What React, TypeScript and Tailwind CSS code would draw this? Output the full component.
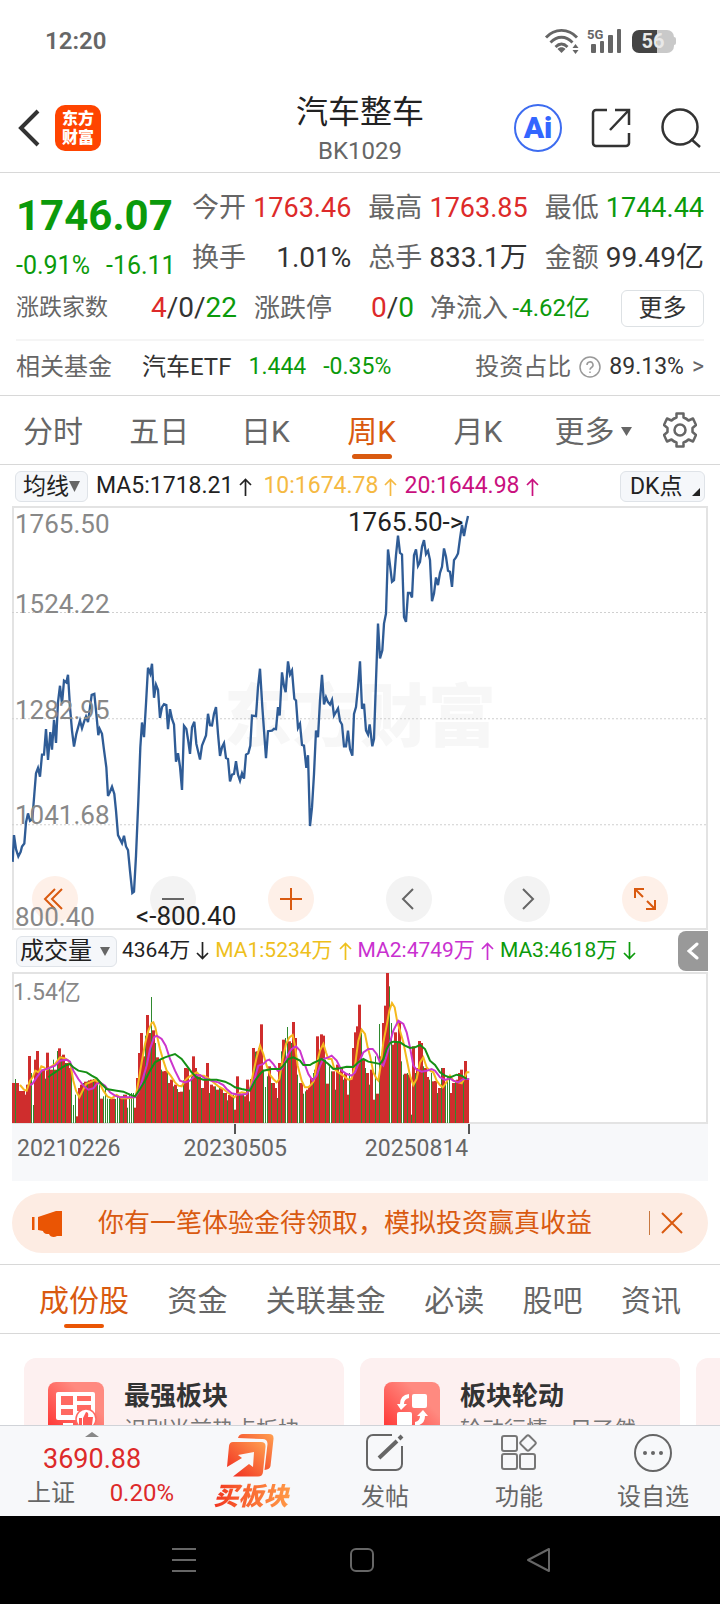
import { useState } from 'react'

const PERIODS = ['分时', '五日', '日K', '周K', '月K']
const SECTIONS = ['成份股', '资金', '关联基金', '必读', '股吧', '资讯']

// weekly close, drawn in thirds of a pixel
const PRICE_LINE =
  '38,1083 42,1003 48,1045 55,1067 62,1053 66,1037 73,1028 78,965 84,938 90,960 97,955 103,880 108,818 114,802 120,828 126,762 132,762 138,686 144,778 151,695 156,747 162,658 168,727 174,605 180,556 186,610 192,541 199,546 204,523 210,620 216,690 222,738 229,700 240,660 246,683 254,658 258,648 264,665 275,583 283,580 289,640 295,704 299,685 306,700 312,748 319,800 324,886 330,873 336,858 343,880 348,930 354,1003 366,1027 372,1005 378,1037 384,1048 390,1110 397,1176 402,1172 408,1065 415,900 421,740 426,666 432,710 438,610 444,502 451,520 456,490 462,592 468,553 474,568 480,652 486,620 492,611 499,614 504,686 510,626 516,655 522,672 528,783 534,758 540,798 546,868 552,676 559,685 564,716 570,760 576,680 583,664 589,730 600,777 606,735 618,705 624,640 630,674 636,675 642,640 648,620 654,700 660,766 666,740 672,728 678,772 684,775 690,842 696,822 702,820 708,782 714,822 720,840 726,818 732,834 738,762 745,758 751,735 756,645 768,647 774,560 780,505 787,620 798,773 804,692 816,690 822,685 828,686 834,620 839,645 846,516 852,557 857,575 864,483 870,522 876,510 883,595 888,600 894,682 900,670 906,733 912,735 919,802 924,764 930,976 936,920 942,820 948,690 954,710 960,600 966,523 972,612 978,590 984,605 990,612 996,598 1002,645 1014,624 1020,662 1026,672 1032,737 1038,737 1044,690 1050,745 1057,765 1062,640 1068,620 1074,560 1080,483 1086,625 1092,610 1098,690 1104,702 1109,672 1117,737 1122,715 1128,540 1134,370 1140,474 1147,450 1152,370 1158,340 1164,148 1170,195 1176,245 1182,240 1188,165 1194,107 1200,158 1206,163 1212,350 1218,365 1224,278 1230,278 1236,292 1242,165 1248,148 1254,197 1260,185 1266,140 1272,120 1278,162 1284,152 1290,180 1296,303 1302,280 1308,232 1314,255 1320,218 1326,200 1332,145 1338,170 1344,212 1350,215 1356,260 1362,180 1368,172 1374,160 1380,115 1386,75 1392,108 1398,75 1404,48'

// weekly volume, negative = down week
const VOLUME = [
  120, -132, 120, 96, 96, 96, 85, 115, 201, -150, -54, 190, 216, 150, -160, 160, -133, 211, -165, 160,
  -190, 160, -216, 224, -200, 205, -180, 180, 165, -162, -54, -85, 20, 105, 115, -120, 124, -125, 128, 130,
  -132, 130, -128, -115, 73, -80, -110, -73, -72, 73, 73, -72, -78, -80, 80, -85, 85, -46, -85, -90,
  -90, 46, 135, 210, 270, 200, -262, 324, 270, -378, 278, -240, 197, 190, -160, 155, 156, -155, 120, 130,
  -110, 115, -102, 93, 94, -128, 165, 164, -100, -140, 200, 165, -145, 140, -105, 105, 130, 180, -90, 115,
  110, -110, 100, -105, 105, -90, 90, -68, 84, 80, -85, 40, 140, -85, 84, -85, 80, 130, -65, 132,
  225, -214, 215, 225, 296, -160, -108, -140, 170, -120, 120, 105, -75, 180, -215, 250, -255, -288, 245, -240,
  303, 255, -145, -120, 120, -88, -95, 100, 110, 135, -150, 160, 260, -210, 266, 262, -190, 118, -170, -155,
  155, -100, 175, -150, 165, -130, 150, 85, -150, 130, 225, 272, 290, 355, -270, 190, -165, 150, -115, 160,
  70, -200, 88, -297, 200, 300, 352, 450, -410, -300, 235, 272, -240, 300, -185, -145, 148, -150, 145, -25,
  230, -150, 165, 246, 240, -170, 165, 138, -130, -150, 125, 126, -90, 105, -165, 165, -120, -140, -138, 90,
  120, -125, 130, 150, 160, -130, 186, 130,
]

const MA1 =
  '60,478 72,492 80,495 90,465 98,455 106,435 116,440 124,422 132,425 140,432 150,425 165,415 180,395 195,398 205,405 212,420 220,465 228,495 238,515 248,495 258,475 270,470 285,463 300,475 310,495 322,512 335,518 350,508 365,518 385,518 400,515 408,508 415,470 425,410 435,355 445,315 455,292 460,290 466,305 472,335 480,370 490,405 500,435 512,450 525,470 535,480 545,482 555,465 565,455 578,447 590,440 600,450 612,450 625,458 640,470 655,482 670,490 685,502 695,510 703,515 712,505 725,500 740,503 750,490 760,440 770,395 780,360 790,385 800,420 810,448 820,460 830,470 838,460 848,400 858,355 868,335 878,328 885,360 893,420 905,465 915,485 925,485 935,475 942,465 950,415 960,375 970,355 978,380 985,400 995,400 1003,430 1015,440 1030,450 1045,462 1055,460 1065,420 1075,345 1085,312 1095,325 1103,365 1110,390 1120,440 1130,460 1135,465 1142,420 1150,350 1160,300 1168,255 1176,232 1184,245 1192,290 1200,315 1210,350 1220,400 1230,450 1240,478 1250,460 1260,410 1270,395 1280,425 1290,435 1300,440 1310,465 1320,478 1328,485 1336,475 1350,450 1360,465 1375,470 1385,473 1392,460 1400,440 1408,440'
const MA2 =
  '90,478 97,475 110,455 125,435 145,428 165,420 180,405 200,402 210,408 220,435 235,460 250,480 265,492 280,488 290,475 300,470 315,480 330,500 345,510 360,515 405,515 415,500 425,470 440,420 450,370 462,335 470,330 485,340 497,360 510,400 525,435 540,465 555,470 570,465 585,450 600,448 615,458 635,465 655,470 670,478 680,490 695,503 715,507 740,505 755,480 765,455 775,420 790,415 800,405 808,402 820,415 833,435 845,430 855,410 865,385 875,370 888,362 900,375 910,405 925,445 938,465 950,450 960,420 970,400 985,395 995,390 1010,405 1025,435 1040,445 1055,450 1065,440 1075,415 1090,380 1105,370 1118,370 1130,385 1140,410 1150,420 1160,390 1170,350 1180,315 1195,285 1210,295 1220,320 1230,365 1240,420 1250,432 1265,438 1280,435 1295,430 1305,435 1320,455 1335,463 1350,458 1360,465 1375,470 1390,460 1408,460'
const MA3 =
  '145,455 150,450 165,440 180,430 195,420 210,415 220,425 235,435 260,440 275,450 290,458 305,475 320,490 350,495 370,498 390,507 405,512 420,490 435,465 450,435 465,410 480,402 495,395 510,390 525,385 545,400 560,420 575,440 590,455 610,462 650,462 675,468 690,475 705,485 725,490 750,495 765,465 780,445 790,435 815,430 840,430 850,420 865,400 880,395 900,405 910,418 930,418 940,412 955,405 965,400 985,415 1000,430 1020,428 1040,423 1060,424 1075,410 1090,400 1105,408 1140,415 1150,400 1160,370 1170,352 1180,348 1200,350 1215,360 1230,367 1245,365 1260,358 1275,370 1290,405 1305,418 1320,440 1335,450 1350,455 1370,447 1385,450 1400,460'

const PILL = 'flex h-[31px] items-center rounded-md border border-[#dfe3e8] bg-[#f5f7fa] leading-none text-[#222]'

function StatusBar() {
  return (
    <div className="flex h-[82px] shrink-0 items-center pr-[44px] pl-[45px] text-[#666]">
      <span className="flex-1 text-2xl font-semibold">12:20</span>
      <svg width="36" height="26" viewBox="0 0 36 26" fill="none" stroke="#666" strokeWidth="2.800">
        <path d="M2 9.500C10.500 0 24.500 0 33 9.500M6.500 14.500C13 7.500 22 7.500 28.500 14.500M11.500 19C15.500 15 19.500 15 23.500 19" />
        <path d="M17.500 25l-4-4c2-2.500 6-2.500 8 0z" fill="#666" stroke="none" />
        <path d="M28.500 20l3-4 3 4zM28.500 22h6l-3 4z" fill="#666" stroke="none" />
      </svg>
      <div className="relative ml-[7px] h-[26px] w-[36px]">
        <span className="absolute top-0 left-0 text-[13px] leading-[13px] font-bold">5G</span>
        <svg className="ml-[4px]" width="32" height="26" viewBox="0 0 32 26" fill="#666">
          <rect x="0" y="16" width="5" height="9" rx="1" />
          <rect x="9" y="13" width="4" height="12" rx="1" />
          <rect x="17" y="7" width="5" height="18" rx="1" />
          <rect x="26" y="1" width="4" height="24" rx="1" />
        </svg>
      </div>
      <div className="ml-[9px] flex h-[23px] w-[42px] items-center justify-center rounded-[7px] bg-linear-to-r from-[#444] from-60% to-[#c9c9c9] to-60% text-xl leading-none font-bold text-[#e8e8e8]">
        56
      </div>
      <span className="h-[8px] w-[2px] rounded-r-full bg-[#c9c9c9]" />
    </div>
  )
}

function Header() {
  return (
    <header className="grid h-[91px] shrink-0 grid-cols-[1fr_auto_1fr] items-center border-b border-[#d8d8d8] px-[18px]">
      <div className="flex items-center gap-[15px] pt-[2px]">
        <button aria-label="返回">
          <svg width="22" height="38" viewBox="0 0 22 38" fill="none" stroke="#333" strokeWidth="4">
            <path d="M20 2L3 19l17 17" />
          </svg>
        </button>
        <div className="flex size-[46px] flex-col items-center justify-center rounded-[10px] bg-[#ff4400] text-[16px] leading-[19px] font-black text-white">
          <span>东方</span>
          <span>财富</span>
        </div>
      </div>
      <div className="flex flex-col items-center pt-[6px]">
        <h1 className="text-[32px] leading-[42px] text-[#222]">汽车整车</h1>
        <p className="text-2xl leading-[36px] text-[#666]">BK1029</p>
      </div>
      <div className="flex items-center justify-end gap-[29px] pt-[2px]">
        <button aria-label="AI" className="flex size-[48px] items-center justify-center rounded-full border-2 border-[#3d6cf0] text-[30px] leading-none font-black text-[#3366ff]">
          Ai
        </button>
        <button aria-label="分享">
          <svg width="40" height="40" viewBox="0 0 40 40" fill="none" stroke="#333" strokeWidth="2.500">
            <path d="M16 2H5a3 3 0 0 0-3 3v30a3 3 0 0 0 3 3h30a3 3 0 0 0 3-3V25M24 2h14v15M37 3L19 22" />
          </svg>
        </button>
        <button aria-label="搜索">
          <svg width="42" height="42" viewBox="0 0 42 42" fill="none" stroke="#333" strokeWidth="2.500">
            <circle cx="20" cy="20" r="17.500" />
            <path d="M31 32l9 8" />
          </svg>
        </button>
      </div>
    </header>
  )
}

function Stat({ label, value, color }: { label: string; value: string; color: string }) {
  return (
    <div className="flex h-[50px] items-center justify-between text-[27px] whitespace-nowrap">
      <span className="text-[#666]">{label}</span>
      <span className={color}>{value}</span>
    </div>
  )
}

function Quote() {
  return (
    <section className="border-b border-[#d8d8d8] px-4 pt-[10px] whitespace-nowrap text-[#666]">
      <div className="flex">
        <div className="w-[176px]">
          <div className="flex h-[64px] items-center text-[42px] font-bold text-[#0b9a0b]">1746.07</div>
          <div className="flex h-[38px] items-center gap-[16px] text-[25px] text-[#0b9a0b]">
            <span>-0.91%</span>
            <span>-16.11</span>
          </div>
        </div>
        <div className="grid h-[100px] flex-1 grid-cols-3 gap-x-[17px]">
          <Stat label="今开" value="1763.46" color="text-[#dd2a2a]" />
          <Stat label="最高" value="1763.85" color="text-[#dd2a2a]" />
          <Stat label="最低" value="1744.44" color="text-[#0b9a0b]" />
          <Stat label="换手" value="1.01%" color="text-[28px] text-[#333]" />
          <Stat label="总手" value="833.1万" color="text-[28px] text-[#333]" />
          <Stat label="金额" value="99.49亿" color="text-[28px] text-[#333]" />
        </div>
      </div>
      <div className="flex h-[46px] items-center">
        <div className="flex w-[221px] items-center justify-between">
          <span className="text-[23px]">涨跌家数</span>
          <span className="text-[28px] text-[#333]">
            <span className="text-[#dd2a2a]">4</span>/0/<span className="text-[#0b9a0b]">22</span>
          </span>
        </div>
        <div className="ml-[17px] flex w-[160px] items-center justify-between">
          <span className="text-[26px]">涨跌停</span>
          <span className="text-[28px] text-[#333]">
            <span className="text-[#dd2a2a]">0</span>/<span className="text-[#0b9a0b]">0</span>
          </span>
        </div>
        <div className="ml-[16px] flex w-[160px] items-center justify-between">
          <span className="text-[26px]">净流入</span>
          <span className="text-2xl text-[#0b9a0b]">-4.62亿</span>
        </div>
        <button className="ml-auto h-[37px] w-[83px] rounded-md border border-[#dde1e4] text-2xl leading-none text-[#333]">更多</button>
      </div>
      <div className="mt-[8px] flex h-[56px] items-center border-t-2 border-[#f5f5f5] pb-[2px] text-2xl">
        <span className="mr-[30px]">相关基金</span>
        <a href="#etf" className="flex items-center gap-[17px] text-[23px] text-[#0b9a0b]">
          <span className="text-2xl text-[#333]">汽车ETF</span>
          <span>1.444</span>
          <span>-0.35%</span>
        </a>
        <a href="#ratio" className="ml-auto flex items-center gap-[8px]">
          投资占比
          <svg width="22" height="22" viewBox="0 0 22 22" fill="none" stroke="#999" strokeWidth="1.500">
            <circle cx="11" cy="11" r="10" />
            <path d="M8 9a3 3 0 1 1 4.500 2.500c-1 .6-1.500 1-1.500 2.200M11 15.500v1.500" />
          </svg>
          <span className="text-[23px] text-[#333]">89.13%</span>
          <span className="text-[23px]">&gt;</span>
        </a>
      </div>
    </section>
  )
}

function PeriodTabs() {
  const [active, setActive] = useState('周K')
  return (
    <nav className="flex h-[69px] items-stretch border-b border-[#d8d8d8] pr-4 text-[30px] text-[#666]">
      {PERIODS.map(p => (
        <button
          key={p}
          onClick={() => setActive(p)}
          className={`relative flex flex-1 items-center justify-center pt-[2px] ${p === active ? 'text-[#d95a10]' : ''}`}
        >
          {p}
          {p === active && <span className="absolute bottom-[5px] h-[5px] w-[40px] rounded-full bg-[#d95a10]" />}
        </button>
      ))}
      <button className="flex w-[124px] items-center justify-center gap-[6px] pt-[2px]">
        更多
        <svg width="11" height="9" viewBox="0 0 11 9" fill="#666">
          <path d="M0 0h11L5.500 9z" />
        </svg>
      </button>
      <button aria-label="设置" className="flex w-[49px] items-center justify-center">
        <svg width="34" height="36" viewBox="0 0 34 36" fill="none" stroke="#666" strokeWidth="2.500" strokeLinejoin="round">
          <path d="M13.500 1.500h7v4q3 1 5 3l4.500-2 3 6.500-3.500 3v4l3.500 3-3 6.500-4.500-2q-2 2-5 3v4h-7v-4q-3-1-5-3l-4.500 2L1 23l3.500-3v-4L1 13l3-6.500 4.500 2q2-2 5-3z" />
          <circle cx="17" cy="18" r="5.500" />
        </svg>
      </button>
    </nav>
  )
}

function Arrow({ up }: { up?: boolean }) {
  return (
    <svg className="ml-[6px]" width="13" height="18" viewBox="0 0 13 18" fill="none" stroke="currentColor" strokeWidth="1.700">
      <path d={up ? 'M6.500 18V1.500M1 7l5.500-5.500L12 7' : 'M6.500 0v16.500M1 11l5.500 5.500L12 11'} />
    </svg>
  )
}

function ChartButton({ warm, label, children }: { warm?: boolean; label: string; children: React.ReactNode }) {
  return (
    <button aria-label={label} className={`size-[46px] rounded-full ${warm ? 'bg-[#fef0e8]' : 'bg-[#f3f3f3]'}`}>
      <svg width="46" height="46" viewBox="0 0 46 46" fill="none" stroke={warm ? '#d95a10' : '#666'} strokeWidth="2">
        {children}
      </svg>
    </button>
  )
}

function PriceChart() {
  return (
    <section>
      <div className="flex h-[41px] items-center px-[15px] pt-[2px] text-[23px] whitespace-nowrap">
        <button className={`${PILL} w-[73px] justify-center`}>
          均线
          <svg width="11" height="11" viewBox="0 0 11 11" fill="#666">
            <path d="M0 0h11L5.500 11z" />
          </svg>
        </button>
        <span className="ml-[8px] flex items-center text-[#222]">MA5:1718.21<Arrow up /></span>
        <span className="ml-[11px] flex items-center text-[#f5b942]">10:1674.78<Arrow up /></span>
        <span className="ml-[7px] flex items-center text-[#c9107e]">20:1644.98<Arrow up /></span>
        <button className={`${PILL} ml-auto w-[85px] justify-between pr-[4px] pl-[9px]`}>
          DK点
          <svg className="mb-[5px] self-end" width="8" height="8" viewBox="0 0 8 8" fill="#222">
            <path d="M8 0v8H0z" />
          </svg>
        </button>
      </div>
      <div className="relative mx-3 h-[424px] text-[26px] leading-none text-[#888] inset-ring-2 inset-ring-[#e3e3e3]">
        <div className="absolute inset-0 flex items-center justify-center text-[68px] font-black text-[#f7f7f7]">东方财富</div>
        <svg className="absolute inset-0 size-full" viewBox="36 18 2088 1269" preserveAspectRatio="none" fill="none">
          <path d="M36 337H2124M36 655H2124M36 972H2124" stroke="#d0d0d0" strokeWidth="3" strokeDasharray="6 6" />
        </svg>
        <div className="absolute right-[40px] bottom-[8px] left-[20px] flex justify-between">
          <ChartButton warm label="最左"><path d="M23 13L13 23l10 10M30 13L20 23l10 10" /></ChartButton>
          <ChartButton label="缩小"><path d="M12 23h22" /></ChartButton>
          <ChartButton warm label="放大"><path d="M12 23h22M23 12v22" /></ChartButton>
          <ChartButton label="向左"><path d="M27 13L17 23l10 10" /></ChartButton>
          <ChartButton label="向右"><path d="M19 13l10 10-10 10" /></ChartButton>
          <ChartButton warm label="全屏"><path d="M13 22v-9h9M13 13l8 8M33 24v9h-9M33 33l-8-8" /></ChartButton>
        </div>
        <svg className="absolute inset-0 size-full" viewBox="36 18 2088 1269" preserveAspectRatio="none" fill="none">
          <polyline points={PRICE_LINE} stroke="#2f5c96" strokeWidth="7" />
        </svg>
        <span className="absolute top-[5px] left-[3px]">1765.50</span>
        <span className="absolute top-[85px] left-[3px]">1524.22</span>
        <span className="absolute top-[191px] left-[3px]">1282.95</span>
        <span className="absolute top-[296px] left-[3px]">1041.68</span>
        <span className="absolute bottom-0 left-[3px]">800.40</span>
        <span className="absolute top-[3px] left-[336px] text-[#222]">1765.50-&gt;</span>
        <span className="absolute bottom-[1px] left-[124px] text-[#222]">&lt;-800.40</span>
      </div>
    </section>
  )
}

function VolumeChart() {
  const bars = VOLUME.map((v, i) => ({ x: 36 + i * 6, v }))
  return (
    <section>
      <div className="flex h-[42px] items-center pr-3 pl-4 text-[21px] whitespace-nowrap">
        <button className={`${PILL} w-[101px] justify-between px-[3px] text-2xl`}>
          成交量
          <svg className="mr-[3px]" width="10" height="9" viewBox="0 0 10 9" fill="#666">
            <path d="M0 0h10L5 9z" />
          </svg>
        </button>
        <span className="ml-[5px] flex items-center text-[#222]">4364万<Arrow /></span>
        <span className="ml-[6px] flex items-center text-[#eec01c]">MA1:5234万<Arrow up /></span>
        <span className="ml-[6px] flex items-center text-[#c930d0]">MA2:4749万<Arrow up /></span>
        <span className="ml-[6px] flex items-center text-[#0b9a0b]">MA3:4618万<Arrow /></span>
        <button aria-label="收起" className="ml-auto flex h-[40px] w-[30px] items-center justify-center rounded-l-lg bg-[#999]">
          <svg width="12" height="18" viewBox="0 0 12 18" fill="none" stroke="#fff" strokeWidth="3" strokeLinecap="round">
            <path d="M10 2L2 9l8 7" />
          </svg>
        </button>
      </div>
      <div className="relative mx-3 h-[152px] inset-ring-2 inset-ring-[#e3e3e3]">
        <span className="absolute top-[4px] left-[1px] text-[23px] text-[#888]">1.54亿</span>
        <svg className="absolute inset-0 size-full" viewBox="36 139 2088 456" preserveAspectRatio="none" fill="none">
          <g fill="#cf2d2d">
            {bars.filter(b => b.v > 0).map(b => (
              <rect key={b.x} x={b.x} y={592 - b.v} width="9" height={b.v} />
            ))}
          </g>
          <g fill="#2f8a2f">
            {bars.filter(b => b.v < 0).map(b => (
              <rect key={b.x} x={b.x + 3} y={592 + b.v} width="3" height={-b.v} />
            ))}
          </g>
          <g strokeWidth="6">
            <polyline points={MA1} stroke="#f5b91e" />
            <polyline points={MA2} stroke="#cc35cc" />
            <polyline points={MA3} stroke="#159015" />
          </g>
        </svg>
      </div>
      <div className="relative mx-3 flex h-[57px] items-center bg-[#f7f8fa] pb-[7px] pl-[5px] text-[23px] text-[#666]">
        <span>20210226</span>
        <span className="ml-[63px]">20230505</span>
        <span className="ml-[78px]">20250814</span>
        <span className="absolute top-0 left-[222px] h-[10px] w-[2px] bg-[#555]" />
        <span className="absolute top-0 left-[456px] h-[10px] w-[2px] bg-[#555]" />
      </div>
    </section>
  )
}

function Notice() {
  return (
    <div className="mx-3 mt-[12px] mb-[11px] flex h-[60px] items-center rounded-full bg-[#fdece3] pr-[25px] pl-[20px] text-[#d95a10]">
      <svg width="30" height="36" viewBox="0 0 30 36" fill="#ea5504">
        <path d="M0 12h2.500v13H0zM6 12l18-6h6v25h-5c-3 2-7 1-8-2h-2c-2 0-4-2-4-3l-5-1z" />
      </svg>
      <a href="#trial" className="ml-[36px] flex-1 text-[26px] whitespace-nowrap">你有一笔体验金待领取，模拟投资赢真收益</a>
      <span className="mr-[11px] h-[24px] w-[1px] bg-[#c87840]" />
      <button aria-label="关闭">
        <svg width="22" height="22" viewBox="0 0 22 22" stroke="#d95a10" strokeWidth="2">
          <path d="M1 1l20 20M21 1L1 21" />
        </svg>
      </button>
    </div>
  )
}

function SectionTabs() {
  const [active, setActive] = useState('成份股')
  return (
    <nav className="flex h-[70px] items-stretch justify-between border-y border-[#d8d8d8] px-[39px] text-[30px] text-[#666]">
      {SECTIONS.map(s => (
        <button
          key={s}
          onClick={() => setActive(s)}
          className={`relative flex items-center justify-center pt-[2px] whitespace-nowrap ${s === active ? 'text-[#d95a10]' : ''}`}
        >
          {s}
          {s === active && <span className="absolute bottom-[5px] h-[4px] w-[40px] rounded-full bg-[#ea5504]" />}
        </button>
      ))}
    </nav>
  )
}

function Card({ title, text, children }: { title: string; text: string; children: React.ReactNode }) {
  return (
    <a href="#card" className="flex h-[104px] w-[320px] shrink-0 gap-[20px] rounded-xl bg-[#fdf0f0] p-[24px]">
      <svg width="56" height="56" viewBox="0 0 56 56" fill="#fff">
        <defs>
          <linearGradient id="tile" x1="0" y1="1" x2="1" y2="0">
            <stop offset="0" stopColor="#ff2a2a" />
            <stop offset="0.700" stopColor="#ff8a80" />
          </linearGradient>
        </defs>
        <rect width="56" height="56" rx="8" fill="url(#tile)" />
        {children}
      </svg>
      <div className="whitespace-nowrap">
        <h2 className="text-[26px] leading-[28px] font-bold text-[#333]">{title}</h2>
        <p className="mt-[6px] text-[22px] leading-[28px] text-[#777]">{text}</p>
      </div>
    </a>
  )
}

function BottomBar() {
  return (
    <footer className="flex h-[91px] shrink-0 border-t border-[#d0d3d8] bg-[#f7f8fa] text-2xl text-[#666]">
      <a href="#index" className="relative flex w-[184px] flex-col justify-center pt-[8px] text-[#dd2a2a]">
        <svg className="absolute top-[6px] left-[85px]" width="14" height="5" viewBox="0 0 14 5" fill="#888">
          <path d="M7 0l7 5H0z" />
        </svg>
        <span className="pl-[43px] text-[27px] leading-[35px]">3690.88</span>
        <span className="flex justify-between pr-[10px] pl-[27px] leading-[32px]">
          <span className="text-[#666]">上证</span>
          <span>0.20%</span>
        </span>
      </a>
      <button className="flex flex-1 flex-col items-center pt-[8px]">
        <svg width="48" height="43" viewBox="0 0 48 43">
          <defs>
            <linearGradient id="buy" x1="0" y1="1" x2="1" y2="0">
              <stop offset="0" stopColor="#f0281e" />
              <stop offset="1" stopColor="#ffa050" />
            </linearGradient>
          </defs>
          <path d="M11 4q1-4 5-4h26q5 0 4.500 5l-3 27q-.5 3.500-6 4l3-26q0-5-5-5z" fill="url(#buy)" />
          <path d="M6 8h28q5 0 4.500 5l-2.500 25q-.5 4.500-5 4.500H6L22 30l4 3 1-15-16 3 4 3L0 33l2-21q.5-4 4-4z" fill="url(#buy)" />
        </svg>
        <span className="bg-linear-to-r from-[#f0281e] to-[#ff9c48] bg-clip-text px-1 text-[25px] leading-[39px] font-black text-transparent italic">买板块</span>
      </button>
      <button className="flex flex-1 flex-col items-center gap-[10px] pt-[8px]">
        <svg width="38" height="38" viewBox="0 0 38 38" fill="none" stroke="#666" strokeWidth="2">
          <path d="M26 1H7a6 6 0 0 0-6 6v23a6 6 0 0 0 6 6h23a6 6 0 0 0 6-6V12" />
          <path d="M13 24L31 7M33 5l3-3" strokeWidth="4" />
        </svg>
        <span className="leading-[30px]">发帖</span>
      </button>
      <button className="flex flex-1 flex-col items-center gap-[10px] pt-[8px]">
        <svg width="36" height="38" viewBox="0 0 36 38" fill="none" stroke="#777" strokeWidth="2">
          <rect x="1" y="2" width="15" height="15" rx="2" />
          <rect x="1" y="20" width="15" height="15" rx="2" />
          <rect x="19" y="20" width="15" height="15" rx="2" />
          <rect x="21" y="3" width="12" height="12" rx="2" transform="rotate(45 27 9)" />
        </svg>
        <span className="leading-[30px]">功能</span>
      </button>
      <button className="flex flex-1 flex-col items-center gap-[10px] pt-[8px]">
        <svg width="38" height="38" viewBox="0 0 38 38" fill="#666">
          <circle cx="19" cy="19" r="18" fill="none" stroke="#666" strokeWidth="2" />
          <circle cx="11" cy="19" r="2" />
          <circle cx="19" cy="19" r="2" />
          <circle cx="27" cy="19" r="2" />
        </svg>
        <span className="leading-[30px]">设自选</span>
      </button>
    </footer>
  )
}

function SystemNav() {
  return (
    <div className="flex h-[88px] shrink-0 items-center justify-between bg-black px-[169px]">
      <button aria-label="最近任务">
        <svg width="30" height="26" viewBox="0 0 30 26" stroke="#666" strokeWidth="2">
          <path d="M3 2h24M3 13h24M3 24h24" />
        </svg>
      </button>
      <button aria-label="主屏幕">
        <svg width="26" height="26" viewBox="0 0 26 26" fill="none" stroke="#666" strokeWidth="2">
          <rect x="2" y="2" width="22" height="22" rx="5" />
        </svg>
      </button>
      <button aria-label="后退">
        <svg width="26" height="26" viewBox="0 0 26 26" fill="none" stroke="#666" strokeWidth="2" strokeLinejoin="round">
          <path d="M24 2v22L3 13z" />
        </svg>
      </button>
    </div>
  )
}

export default function App() {
  return (
    <div className="flex h-screen flex-col bg-white font-[Roboto,'Noto_Sans_CJK_SC',sans-serif]">
      <StatusBar />
      <Header />
      <main className="min-h-0 flex-1 overflow-x-hidden overflow-y-auto [scrollbar-width:none]">
        <Quote />
        <PeriodTabs />
        <PriceChart />
        <VolumeChart />
        <Notice />
        <SectionTabs />
        <div className="flex gap-[16px] overflow-hidden px-[24px] pt-[24px]">
          <Card title="最强板块" text="识别当前热点板块">
            <rect x="8" y="10" width="39" height="28" rx="2" />
            <path d="M15 41h10v5H15z" />
            <path d="M13 14h12v9H13zM29 14h14v5H29zM13 27h12v6H13zM29 23h14v6H29z" fill="#ff6a62" />
            <circle cx="38" cy="37" r="10" stroke="#ff6a62" strokeWidth="1.500" />
            <path d="M31 36h3v8h-3zM35 36l3-6q3 0 2 5h5l-1 8h-9z" fill="#ff5a55" />
          </Card>
          <Card title="板块轮动" text="轮动行情一目了然">
            <rect x="28" y="12" width="15" height="14" rx="2" />
            <rect x="13" y="30" width="15" height="14" rx="2" />
            <path d="M25 12v4q-5 1-5 6h3l-6 6-4-6h3q0-9 9-10zM31 44v-4q5-1 5-6h-3l6-6 5 6h-3q0 9-10 10z" />
          </Card>
          <div className="h-[104px] w-[320px] shrink-0 rounded-xl bg-[#fdf0f0]" />
        </div>
      </main>
      <BottomBar />
      <SystemNav />
    </div>
  )
}
